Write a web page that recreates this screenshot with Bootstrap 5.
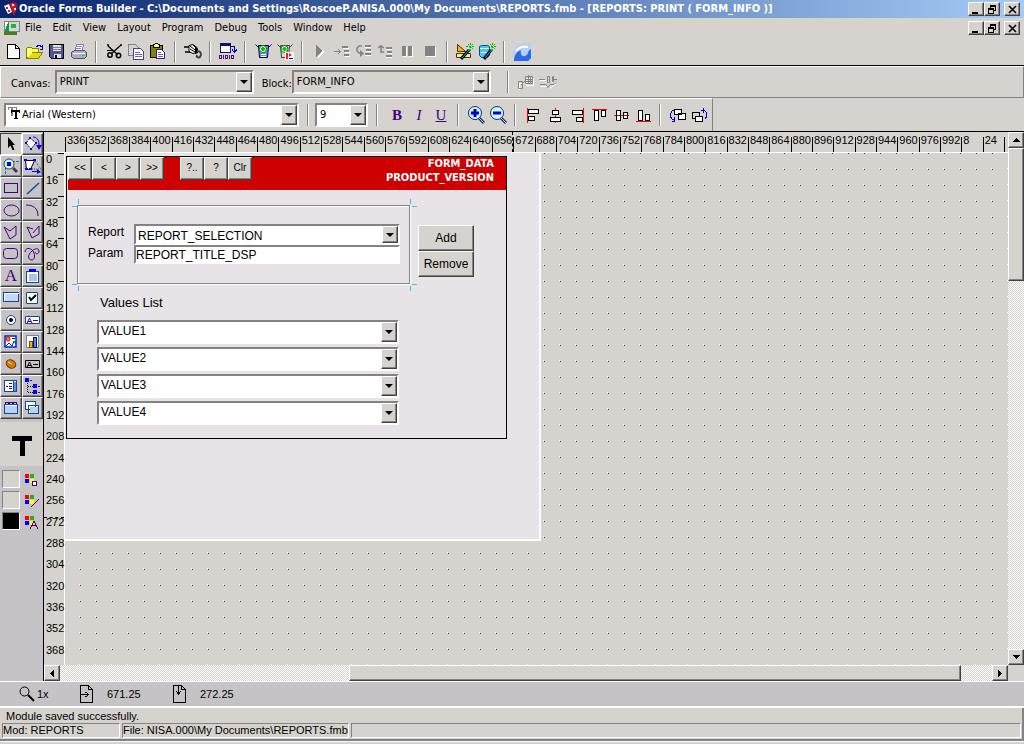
<!DOCTYPE html>
<html lang="en">
<head>
<meta charset="utf-8">
<meta name="viewport" content="width=device-width, initial-scale=1">
<title>Oracle Forms Builder</title>
<link href="https://cdn.jsdelivr.net/npm/bootstrap@5.3.0/dist/css/bootstrap.min.css" rel="stylesheet">
<style>
:root{--face:#d6d3ce;--panel:#c6c3c6;--shade:#848284;--deep:#424142;--form:#e7e3e7;}
body{font-family:"DejaVu Sans Condensed","DejaVu Sans",sans-serif;font-size:11px;line-height:14px;color:#000;background:var(--face)}
.arial{font-family:"Liberation Sans",Arial,sans-serif;font-size:12px}
svg{shape-rendering:crispEdges;display:block;flex:none}
svg.soft{shape-rendering:auto}
button,select,input{font:inherit;color:inherit;border-radius:0}
.bevel{background:var(--face);border:1px solid;border-color:#fff var(--deep) var(--deep) #fff;box-shadow:inset -1px -1px var(--shade);padding:0}
.titlebar{height:18px;background:linear-gradient(90deg,#08246b,#a5cbf7);color:#fff;padding-left:4px}
.titlebar h1{font-size:11px;line-height:18px;font-weight:700;margin:0 0 0 2px}
.winbtn{width:16px;height:14px;display:flex;align-items:center;justify-content:center;color:#000}
.menubar{height:20px;padding-left:4px}
.menubar a{color:#000;text-decoration:none;padding:0 6px 0 5px}
.tools{height:28px;padding-left:2px;border-bottom:1px solid #000}
.tool{width:22px;height:22px;border:0;background:none;padding:0;display:flex;align-items:center;justify-content:center;flex:none}
.glyph{font-family:"Liberation Serif",serif;font-size:15px;line-height:18px;color:#4a007b}
.vsep{width:2px;margin:0 6px 0 5px;height:22px;background:var(--shade);border-right:1px solid #fff;flex:none}
.canvasbar{height:32px;border:1px solid;border-color:#fff var(--shade) var(--shade) #fff;padding-left:10px}
.formatbar{height:33px;border-right:1px solid var(--shade);border-top:1px solid #fff;padding-left:4px;width:max-content;padding-right:1px}
.drop{position:relative;display:block}
.drop::before{content:"";position:absolute;right:2px;top:2px;bottom:2px;width:16px;background:var(--face);border:1px solid;border-color:#fff var(--deep) var(--deep) #fff;box-shadow:inset -1px -1px var(--shade);pointer-events:none}
.drop::after{content:"";position:absolute;right:6px;top:calc(50% - 2px);border:4px solid transparent;border-top-color:#000;border-bottom:0;pointer-events:none}
.combo{appearance:none;background:var(--face);border:2px solid;border-color:var(--shade) #fff #fff var(--shade);outline:0;padding:0 18px 2px 3px;height:24px;width:100%;line-height:15px}
.combo.paper{background:#fff}
.w-canvas{width:199px}.w-block{width:199px}.w-font{width:295px}.w-size{width:53px}
.w-font .combo{padding-left:16px}
.w-font svg{position:absolute;left:4px;top:4px}
.work{border-top:1px solid #000}
.palette{width:44px;background:var(--panel);border-right:1px solid #000;flex:none}
.palgrid{display:grid;grid-template-columns:22px 21px;grid-auto-rows:22px;padding-top:1px}
.palgrid button{background:var(--panel);border:1px solid;border-color:#fff var(--deep) var(--deep) #fff;box-shadow:inset -1px -1px var(--shade);padding:0;display:flex;align-items:center;justify-content:center;overflow:hidden}
.palgrid .on{background:var(--face);border-color:var(--deep) #fff #fff var(--deep);box-shadow:none}
.palgrid .letter{color:#42007b;font-family:"Liberation Serif",serif;font-size:17px}
.sample{height:44px;background:var(--face);margin-top:3px;padding-top:3px}
.swatches{gap:3px;padding:4px 0 0 2px}
.swatch{width:18px;height:18px;border:1px solid;border-color:var(--shade) #fff #fff var(--shade);background:var(--face)}
.ruler{font-family:"Liberation Sans",Arial,sans-serif;font-size:11px}
.htop{height:21px;border-bottom:1px solid #fff}
.hticks{display:grid;grid-template-columns:repeat(44,minmax(0,1fr));margin:0 4px 0 21px;position:relative}
.hticks span{position:relative;padding-left:2px;line-height:16px;height:20px;white-space:nowrap}
.hticks span::before,.hticks span:last-child::after{content:"";position:absolute;left:0;top:5px;bottom:0;width:1px;background:#000}
.hticks span:last-child::after{left:100%}
.vrule{width:21px;flex:none;border-right:1px solid #fff;height:512px;position:relative;display:grid;grid-template-rows:repeat(24,minmax(0,1fr))}
.vrule span{position:relative;padding-left:2px;line-height:13px}
.vrule span.short::before{content:"";position:absolute;right:0;top:0;width:6px;height:1px;background:#000}
.vrule i{position:absolute;left:0;right:0;top:71%;border-top:1px dashed #000}
.hticks i{position:absolute;left:47.6%;top:0;height:20px;border-left:1px dashed #000}
.stage{background:url("data:image/svg+xml,%3Csvg xmlns='http://www.w3.org/2000/svg' width='16' height='16' shape-rendering='crispEdges'%3E%3Crect x='14' y='14' width='1' height='1' fill='%23fff'/%3E%3Crect x='15' y='15' width='1' height='1' fill='%23424142'/%3E%3C/svg%3E") 0 1px}
.sheet{width:476px;height:388px;background:var(--form);border:2px solid #fff;border-width:0 2px 2px 0;padding:3px 0 0 1px}
.frm{width:441px;height:283px;border:1px solid #000}
.band{height:33px;background:#ce0000;margin-left:1px;color:#fff;font-weight:700;line-height:14px}
.band button{width:24px;height:23px;color:#000;font-weight:400;line-height:18px;font-size:10px;padding-bottom:2px}
.group{width:333px;height:79px;border:1px solid var(--shade);box-shadow:inset 1px 1px #fff,1px 1px #fff;margin:15px 0 0 10px;position:relative;padding:18px 8px 0 10px}
.group>svg{position:absolute;left:-6px;top:-8px}
.pairs{display:grid;grid-template-columns:46px 266px;align-items:start;font-size:12px}
.pairs .combo{height:21px;padding:3px 18px 0 2px}
.field{border:2px solid;border-color:var(--shade) #fff #fff var(--shade);outline:0;background:#fff;height:19px;padding:0;width:100%;line-height:15px}
.pairs label,.cap{font-family:"Liberation Sans",sans-serif;font-size:12px}
.pairs label{padding-top:1px}
.cap{margin:12px 0 0 33px;font-size:13px}
.acts{padding-top:35px}
.act{width:56px;height:26px}
.vals{width:302px;display:grid;gap:3px;margin:10px 0 0 30px}
.vals .combo{padding-left:2px;padding-bottom:1px}
.track{background:repeating-conic-gradient(#fff 0 25%,var(--face) 0 50%) 0 0/2px 2px}
.vscroll{width:16px;flex:none}
.vthumb{height:25%}
.hscroll{height:16px;margin-right:16px}
.hthumb{margin-left:30%;width:63.5%}
.sbtn{width:16px;height:16px;flex:none;display:flex;align-items:center;justify-content:center}
.zoombar{background:var(--panel);height:27px;border-top:1px solid #fff;border-bottom:2px solid #fff;padding-left:19px;font-family:"Liberation Sans",sans-serif}
.zoomval{width:45px;padding-left:2px}
.posval{width:80px;padding-left:14px}
.status{border-right:2px solid var(--shade);border-bottom:2px solid var(--shade);padding:1px 1px 1px 2px;font-family:"Liberation Sans",sans-serif}
.cells{gap:2px}
.cell{border:1px solid;border-color:var(--shade) #fff #fff var(--shade);height:15px;line-height:13px;white-space:nowrap}
.cell-mod{width:118px}
.foot{height:3px;border-top:1px solid #fff}
</style>
</head>
<body class="d-flex flex-column min-vh-100">
<header>
<div class="titlebar d-flex align-items-center">
<svg class="soft" width="13" height="14" viewBox="0 0 13 14" aria-hidden="true"><path fill="#fff" d="M0 4l5-2 3 8-4 2z"/><path fill="#de1018" d="M5 2l4-2 4 2-1 8-3 1-1-3z"/><path fill="#fff" d="M8 2h2v2H8zM10 6h2v2h-2z"/><path fill="#de1018" d="M2 5h2v2H2zM4 8h2v2H4zM9 9l3 5-3-2z"/></svg>
<h1 class="flex-grow-1 text-nowrap">Oracle Forms Builder - C:\Documents and Settings\RoscoeP.ANISA.000\My Documents\REPORTS.fmb - [REPORTS: PRINT ( FORM_INFO )]</h1>
<div class="d-flex pe-1">
<button class="bevel winbtn" aria-label="Minimize"><svg width="10" height="9"><path fill="#000" d="M1 7h6v2H1z"/></svg></button>
<button class="bevel winbtn" aria-label="Restore"><svg width="10" height="10"><path fill="none" stroke="#000" d="M3.500 4V1.500h5V6H7M1.500 4.500h5V9h-5zM3 2.500h6M1 5.500h6"/></svg></button>
<button class="bevel winbtn ms-1" aria-label="Close"><svg class="soft" width="9" height="9"><path stroke="#000" stroke-width="1.600" d="M1 1l7 7M8 1L1 8"/></svg></button>
</div></div>
<div class="menubar d-flex align-items-center">
<svg width="16" height="15" viewBox="0 0 16 15" aria-hidden="true"><path fill="#848284" d="M0 0h16v11H0z"/><path fill="#fff" d="M1 1h3v8H1z"/><path fill="#109a42" d="M3 3l3-2v9l-6 3z"/><path fill="#c6dfd6" d="M5 1h10v9H5z"/><path fill="#31aa31" d="M7 3h5v4H7z"/><path fill="#52791a" d="M0 11h13v3H0z"/></svg>
<nav class="d-flex flex-grow-1" aria-label="Menu"><a href="#">File</a><a href="#">Edit</a><a href="#">View</a><a href="#">Layout</a><a href="#">Program</a><a href="#">Debug</a><a href="#">Tools</a><a href="#">Window</a><a href="#">Help</a></nav>
<div class="d-flex pe-1">
<button class="bevel winbtn" aria-label="Minimize form"><svg width="10" height="9"><path fill="#000" d="M1 7h6v2H1z"/></svg></button>
<button class="bevel winbtn" aria-label="Restore form"><svg width="10" height="10"><path fill="none" stroke="#000" d="M3.500 4V1.500h5V6H7M1.500 4.500h5V9h-5zM3 2.500h6M1 5.500h6"/></svg></button>
<button class="bevel winbtn ms-1" aria-label="Close form"><svg class="soft" width="9" height="9"><path stroke="#000" stroke-width="1.600" d="M1 1l7 7M8 1L1 8"/></svg></button>
</div></div>
<div class="tools d-flex align-items-center" role="toolbar" aria-label="Standard">
<button class="tool" aria-label="New"><svg width="13" height="15"><path fill="#fff" stroke="#000" d="M.5.5h8l3.500 3.500v10.500H.5z"/><path fill="none" stroke="#000" d="M8.500.5V4.500H12"/></svg></button>
<button class="tool" aria-label="Open"><svg width="18" height="16"><path fill="#ffff4a" stroke="#848200" d="M.5 14.500V4.500l1-1h4l1 1h6v4"/><path fill="#dede00" stroke="#848200" d="M.5 14.500l5-6h11l-4 6z"/><path fill="#ffff7b" d="M1 5h5v4l-4 4H1z"/><path fill="none" stroke="#0000ce" d="M10.500 3C12 1 14 1 16.500 3.500M16.500 1v4h-3"/></svg></button>
<button class="tool" aria-label="Save"><svg width="16" height="15"><path fill="#525594" stroke="#000" d="M.5.5h14v14H2.500l-2-2z"/><path fill="#dedfe7" d="M4 1h8v6H4z"/><path fill="#dedfe7" d="M5 10h7v4H5z"/><path fill="#000" d="M6 11h2v3H6z"/><path stroke="#848284" d="M4 3.500h8M4 5.500h8"/></svg></button>
<button class="tool" aria-label="Print"><svg width="17" height="15"><path fill="#fff" stroke="#7b7db5" d="M4.500 6.500l1-6h7l-1 6"/><path fill="#adaec6" stroke="#52556b" d="M.5 8.500l3-2h10l2 2v4l-2 2h-11l-2-2z"/><path fill="#fff" d="M2 9h12v1H2z"/><path fill="#31cf31" d="M11 11h3v1h-3z"/><path stroke="#8486c6" d="M6 2.500h5M5 4.500h5"/></svg></button>
<span class="vsep"></span>
<button class="tool" aria-label="Cut"><svg class="soft" width="17" height="15"><path stroke="#000" stroke-width="1.300" d="M2 2l10 9M15 1L5 10M1 1h2M14 1h2"/><circle cx="4" cy="11" r="2.200" fill="none" stroke="#000" stroke-width="1.500"/><circle cx="12.500" cy="11.500" r="2.200" fill="none" stroke="#000" stroke-width="1.500"/><path stroke="#000" d="M1 6.500h6"/></svg></button>
<button class="tool" aria-label="Copy"><svg width="17" height="16"><path fill="#d6d3ce" stroke="#848284" d="M.5.5h7l3 3v8H.5z"/><path fill="#fff" stroke="#424194" d="M5.500 4.500h7l3 3v8h-10z"/><path stroke="#6b69bd" d="M7 8.500h5M7 10.500h7M7 12.500h7"/></svg></button>
<button class="tool" aria-label="Paste"><svg width="16" height="17"><path fill="#848200" stroke="#000" d="M.5 2.500h12v12H.5z"/><path fill="#ffff63" stroke="#000" d="M3.500 1.500h1l1-1h2l1 1h1v3h-6z"/><path fill="#fff" stroke="#29287b" d="M6.500 6.500h5l3 3v6h-8z"/><path stroke="#6b69bd" d="M8 9.500h3M8 11.500h5M8 13.500h5"/></svg></button>
<span class="vsep"></span>
<button class="tool" aria-label="Connect"><svg width="19" height="15" class="soft"><path stroke="#000" stroke-width="1.500" d="M0 3h6M1 8h6"/><path fill="#fff" stroke="#000" d="M5 1.500l4-1 4 3v5l-4 1-4-2z"/><path stroke="#000" d="M6 2l5 4M6 5l5 3M9 1l3 3"/><path fill="#000" d="M11 3l3 2v4l-3 1z"/><path fill="none" stroke="#424142" stroke-width="2" d="M13 7c4 0 5 3 3 6-2 1-4 0-3-2"/></svg></button>
<span class="vsep"></span>
<button class="tool" aria-label="Compile"><svg width="18" height="17"><path fill="#fff" stroke="#10107b" d="M1.500.5h10v9h-10z"/><path fill="#10107b" d="M1 0h11v3H1z"/><path fill="none" stroke="#0000ce" d="M12 3.500h3.500V9M13 6.500l2.500 3 2.500-3"/><path fill="none" stroke="#4a1073" d="M.5 12.500h2v3h-2zM4.500 12v4M6.500 12.500h2v3h-2zM10.500 12v4M12.500 12.500h2v3h-2z"/></svg></button>
<span class="vsep"></span>
<button class="tool" aria-label="Run form"><svg class="soft" width="17" height="16"><path fill="#738ed6" stroke="#00005a" d="M3.500 1.500h10l-1 12h-8zM.5.500l3 3M16.500.500l-3 3"/><circle cx="8" cy="5" r="3.500" fill="#e7ffe7" stroke="#008200"/><path stroke="#00c600" stroke-width="2" d="M6 5h4M8 3v4"/><path fill="#fff" d="M6 10h5v1H6zM6 12h5v1H6z"/></svg></button>
<button class="tool" aria-label="Debug form"><svg class="soft" width="17" height="16"><path fill="#d6d3d6" stroke="#424142" d="M3.500 1.500h9l-1 12h-7zM.5.500l3 3M15.500.500l-3 3"/><circle cx="7.500" cy="5" r="3.500" fill="#e7ffe7" stroke="#008200"/><path stroke="#00c600" stroke-width="2" d="M5.500 5h4M7.500 3v4"/><path fill="#fff" d="M8 8h9v8H8z"/><path fill="#f71810" d="M9 9h2v6H9zM12 9l3 2-3 2z"/><path fill="#00a" d="M12 14h4v1h-4z"/></svg></button>
<span class="vsep"></span>
<button class="tool" aria-label="Go" disabled><svg width="9" height="13"><path fill="#fff" d="M2 2l7 5-7 6z"/><path fill="#848284" d="M0 0l7 6-7 6z"/></svg></button>
<button class="tool" aria-label="Step into" disabled><svg width="16" height="12"><path fill="none" stroke="#848284" d="M0 5.500h6M4 3l2.500 2.500L4 8" /><path stroke="#848284" stroke-width="2" d="M8 1h6M10 5h5M10 9h5"/><path stroke="#fff" d="M9 2.500h6M11 6.500h5M11 10.500h5"/></svg></button>
<button class="tool" aria-label="Step over" disabled><svg class="soft" width="16" height="13"><path fill="none" stroke="#848284" stroke-width="1.500" d="M6 1H3L1 3v3l2 2h2"/><path fill="#848284" d="M4 5l4 3.500L4 12z"/><path stroke="#848284" stroke-width="2" d="M9 1h6M10 5h5M9 9h6"/><path stroke="#fff" d="M9 2.500h6M10 6.500h5M9 10.500h6"/></svg></button>
<button class="tool" aria-label="Step out" disabled><svg class="soft" width="16" height="13"><path fill="none" stroke="#848284" stroke-width="1.500" d="M6 7H3V1M0 3l3-2 3 2"/><path stroke="#848284" stroke-width="2" d="M8 3h6M9 7h5M8 11h6"/><path stroke="#fff" d="M8 4.500h6M9 8.500h5M8 12.500h6"/></svg></button>
<button class="tool" aria-label="Pause" disabled><svg width="12" height="11"><path fill="#fff" d="M1 1h4v10H1zM7 1h4v10H7z"/><path fill="#848284" d="M0 0h4v10H0zM6 0h4v10H6z"/></svg></button>
<button class="tool" aria-label="Stop" disabled><svg width="11" height="11"><path fill="#fff" d="M1 1h10v10H1z"/><path fill="#848284" d="M0 0h10v10H0z"/></svg></button>
<span class="vsep"></span>
<button class="tool" aria-label="Layout wizard"><svg class="soft" width="18" height="17"><path fill="#ffb600" stroke="#4a3000" d="M1.500 1.500l8 7h-8z"/><path fill="#ffe794" stroke="#4a3000" d="M.5 10.500h14v4H.5z"/><path stroke="#000" stroke-width="3" d="M5 16l8-9"/><path stroke="#00aaff" d="M6 15l8-9"/><path stroke="#00b600" stroke-dasharray="2 1" d="M14.500 0v8M10 3.500h8M12 1l5 5M17 1l-4 4"/></svg></button>
<button class="tool" aria-label="Data block wizard"><svg class="soft" width="18" height="17"><path fill="#42c7ff" stroke="#00517b" d="M1.500 3.500l2-1h6l2 1v9l-2 2h-6l-2-2z"/><path stroke="#fff" d="M2 5.500h9M3 9.500h6"/><path stroke="#000" stroke-width="3" d="M6 16l7-9"/><path stroke="#00aaff" d="M7 15l7-9"/><path stroke="#00b600" stroke-dasharray="2 1" d="M14.500 0v8M10 3.500h8M12 1l5 5M17 1l-4 4"/></svg></button>
<span class="vsep"></span>
<button class="tool" aria-label="Web help"><svg class="soft" width="18" height="18"><path fill="#b5cff7" d="M0 12C0 3 6 0 18 0v18H3z"/><path fill="#296be7" d="M1 18c0-5 2-9 7-11-1 4 1 7 4 6 4-1 2-5 6-7v9l-3 3z"/><path fill="none" stroke="#fff" stroke-width="2" d="M3 8C6 4 10 3 15 4"/></svg></button>
</div>
<div class="canvasbar d-flex align-items-center">
<label for="cv" class="me-1 pt-1">Canvas:</label>
<span class="drop w-canvas"><select id="cv" class="combo"><option>PRINT</option></select></span>
<label for="bl" class="ms-2 pt-1">Block:</label>
<span class="drop w-block"><select id="bl" class="combo"><option>FORM_INFO</option></select></span>
<span class="vsep ms-3"></span>
<button class="tool" disabled aria-label="Apply template"><svg class="soft" width="18" height="15"><path fill="none" stroke="#fff" d="M2.500 15V8.500h4M9.500 3.500h7v7h-7z"/><path fill="none" stroke="#848284" d="M1.500 6.500h4v7h-4zM4 10l5-5M8.500 1.500h7v7h-7zM9 4.500h6M9 6.500h6M11.500 0v8M13.500 2v6"/></svg></button>
<button class="tool" disabled aria-label="Merge"><svg class="soft" width="18" height="14"><path fill="none" stroke="#fff" d="M1 5.500h6M2 11.500h7M11 13.500l6-5"/><path fill="none" stroke="#848284" d="M0 4.500h6M1 9.500h6l2 3 2-3h4l2-2M8.500 1.500h2v6h-2zM13.500 1.500h1v5h-1zM15 4.500h3"/></svg></button>
</div>
<div class="formatbar d-flex align-items-center" role="toolbar" aria-label="Format">
<span class="drop w-font"><select class="combo paper" aria-label="Font"><option>Arial (Western)</option></select>
<svg width="13" height="13"><path fill="#848284" d="M0 0h9v3H8V1H5v8H3V1H1v2H0z"/><path fill="#000" d="M3 3h9v3h-1V5H9v6h1v1H6v-1h1V5H4v1H3z"/></svg></span>
<span class="vsep ms-2"></span>
<span class="drop w-size"><select class="combo paper" aria-label="Size"><option>9</option></select></span>
<span class="vsep mx-2"></span>
<button class="tool glyph fw-bold">B</button>
<button class="tool glyph fst-italic">I</button>
<button class="tool glyph text-decoration-underline">U</button>
<span class="vsep"></span>
<button class="tool" aria-label="Zoom in"><svg class="soft" width="18" height="18"><circle cx="8" cy="7" r="6.500" fill="#cef7ff" stroke="#10306b"/><path stroke="#10306b" stroke-width="3" d="M12 12l5 5"/><path stroke="#c6c3c6" d="M12 12l5 5"/><path stroke="#0000ce" stroke-width="3" d="M4 7h8M8 3v8"/></svg></button>
<button class="tool" aria-label="Zoom out"><svg class="soft" width="18" height="18"><circle cx="8" cy="7" r="6.500" fill="#cef7ff" stroke="#10306b"/><path stroke="#10306b" stroke-width="3" d="M12 12l5 5"/><path stroke="#c6c3c6" d="M12 12l5 5"/><path stroke="#0000ce" stroke-width="3" d="M4 7h8"/></svg></button>
<span class="vsep"></span>
<button class="tool" aria-label="Align left"><svg width="13" height="15"><path stroke="red" d="M.5 0v15"/><path fill="#fff" stroke="#000" d="M1.500 1.500h10v4h-10zM1.500 8.500h6v4h-6z"/></svg></button>
<button class="tool" aria-label="Align center"><svg width="13" height="15"><path stroke="red" d="M6.500 0v15"/><path fill="#fff" stroke="#000" d="M3.500 2.500h6v4h-6zM1.500 9.500h10v4h-10z"/></svg></button>
<button class="tool" aria-label="Align right"><svg width="13" height="15"><path stroke="red" d="M12.500 0v15"/><path fill="#fff" stroke="#000" d="M1.500 2.500h10v4h-10zM5.500 9.500h6v4h-6z"/></svg></button>
<button class="tool" aria-label="Align top"><svg width="15" height="13"><path stroke="red" d="M0 .5h15"/><path fill="#fff" stroke="#000" d="M2.500 1.500h4v10h-4zM9.500 1.500h4v6h-4z"/></svg></button>
<button class="tool" aria-label="Align middle"><svg width="15" height="13"><path stroke="red" d="M0 6.500h15"/><path fill="#fff" stroke="#000" d="M2.500 1.500h4v10h-4zM9.500 3.500h4v6h-4z"/><path stroke="red" d="M3 6.500h3M10 6.500h3"/></svg></button>
<button class="tool" aria-label="Align bottom"><svg width="15" height="13"><path stroke="red" d="M0 12.500h15"/><path fill="#fff" stroke="#000" d="M2.500 1.500h4v10h-4zM9.500 5.500h4v6h-4z"/></svg></button>
<span class="vsep"></span>
<button class="tool" aria-label="Bring to front"><svg width="16" height="15"><path fill="none" stroke="#0000de" d="M5 2.500H2.500l-2 3V9l2 2.500H4M2 13.500h3M4.500 9v5"/><path fill="#fff" stroke="#000" d="M4.500 1.500h7v5h-7zM8.500 5.500h7v6h-7z"/></svg></button>
<button class="tool" aria-label="Send to back"><svg width="16" height="15"><path fill="none" stroke="#0000de" d="M9 2.500h3.500l2 2V9l-2 2.500M11.500 0v5"/><path fill="#d6d3ce" stroke="#000" d="M.5 4.500h7v6h-7z"/><path fill="#fff" stroke="#000" d="M3.500 8.500h7v5h-7z"/></svg></button>
</div>
</header>

<main class="work d-flex flex-grow-1">
<aside class="palette" aria-label="Tool palette">
<div class="palgrid">
<button class="on" aria-label="Select"><svg width="9" height="14" class="soft"><path d="M1 0v11l2.500-2.500L5.500 13h2L5.500 8H8z"/></svg></button>
<button aria-label="Rotate"><svg class="soft" width="18" height="16"><path fill="#fff" stroke="#000" stroke-dasharray="2 1" d="M6 2l6 5-5 6-5-6z"/><path fill="#00f" d="M1 6h2v2H1zM5 1h2v2H5zM6 12h2v2H6zM11 6h2v2h-2z"/><path fill="none" stroke="#00f" d="M9 1c4 0 6 3 6 8"/><path fill="#00f" d="M12 9h6l-3 5z"/></svg></button>
<button aria-label="Magnify"><svg class="soft" width="18" height="18"><path stroke="#00829c" stroke-dasharray="3 1" d="M3.500 6v12M6 4.500h12"/><circle cx="7" cy="7" r="5" fill="#cef7ff" stroke="#424142"/><path fill="#00f" d="M5 5h4v4H5z"/><path stroke="#424142" stroke-width="3" d="M11 11l4 4"/></svg></button>
<button aria-label="Reshape"><svg class="soft" width="18" height="16"><path fill="#fff" stroke="#000" d="M1.500 2.500h9l-4 9h-4z"/><path fill="none" stroke="#424142" stroke-dasharray="1 1" d="M11 3l6 8h-11"/><path fill="#00f" d="M0 1h3v2H0zM9 1h3v2H9zM1 10h3v2H1zM5 10h3v2H5zM8 13h6v1H8zM13 11l4 3-4 2z"/></svg></button>
<button aria-label="Rectangle"><svg width="15" height="11"><path fill="none" stroke="#42007b" d="M.5.5h13v9H.5z"/></svg></button>
<button aria-label="Line"><svg class="soft" width="14" height="13"><path stroke="#104a94" stroke-width="1.500" d="M1 12L13 1"/></svg></button>
<button aria-label="Ellipse"><svg class="soft" width="17" height="13"><ellipse cx="8.500" cy="6.500" rx="7.500" ry="5.500" fill="none" stroke="#42007b"/></svg></button>
<button aria-label="Arc"><svg class="soft" width="14" height="13"><path fill="none" stroke="#42007b" d="M0 1c7 0 12 3 12 11"/></svg></button>
<button aria-label="Polygon"><svg class="soft" width="16" height="15"><path fill="none" stroke="#42007b" d="M1 2l6 4 6-5v9l-6 4z"/></svg></button>
<button aria-label="Polyline"><svg class="soft" width="14" height="14"><path fill="none" stroke="#42007b" d="M7 4L1 2l5 11 7-4V1L7 8"/></svg></button>
<button aria-label="Rounded rectangle"><svg class="soft" width="16" height="12"><rect x=".5" y=".5" width="14" height="10" rx="3" fill="none" stroke="#42007b"/></svg></button>
<button aria-label="Freehand"><svg class="soft" width="17" height="14"><path fill="none" stroke="#42007b" d="M1 5C1 1 6 0 9 4c3 5 1 9-1 9-4 0-5-5 0-9 3-3 7-3 7 0s-3 4-4 1"/></svg></button>
<button class="letter" aria-label="Text">A</button>
<button aria-label="Text item"><svg width="14" height="15"><path fill="#fff" stroke="#104a94" d="M.5 2.500h12v11H.5z"/><path fill="#a5c7ef" d="M3 5h8v7H3z"/><path fill="#00f" d="M3 0h7v3H3z"/></svg></button>
<button aria-label="Push button"><svg width="17" height="12"><path fill="#c6d7f7" stroke="#104a94" d="M.5.5h15v9H.5z"/><path fill="none" stroke="#fff" d="M1.500 8.500V1.500h14"/></svg></button>
<button aria-label="Check box"><svg class="soft" width="13" height="13"><path fill="#fff" stroke="#104a94" d="M.5.5h11v11H.5z"/><path fill="none" stroke="#000" stroke-width="2" d="M3 5l2 3 5-5"/></svg></button>
<button aria-label="Radio button"><svg class="soft" width="12" height="12"><circle cx="6" cy="6" r="4.500" fill="#fff" stroke="#104a94"/><circle cx="6" cy="6" r="2"/></svg></button>
<button aria-label="Display item"><svg class="soft" width="16" height="9"><path fill="#fff" stroke="#104a94" d="M.5.5h14v7H.5z"/><path fill="none" stroke="#42007b" d="M2 7l2.500-5L7 7M3 5.500h3M8 4.500h5"/></svg></button>
<button aria-label="Image item"><svg class="soft" width="14" height="14"><path fill="#fff" stroke="#0028c6" stroke-width="1.500" d="M1 1h11v11H1z"/><circle cx="4" cy="4" r="2" fill="#ff9200" stroke="red"/><path fill="none" stroke="#0028c6" d="M2 11l3-3 3 3 2-5 2 3M8 3.500h3"/></svg></button>
<button aria-label="Chart item"><svg width="14" height="14"><path fill="#fff" stroke="#848284" d="M.5.5h12v12H.5z"/><path fill="#ffb600" stroke="#7b4900" d="M3.500 6.500h3v6h-3z"/><path fill="#528eff" stroke="#00087b" d="M7.500 2.500h3v10h-3z"/></svg></button>
<button aria-label="Bean area"><svg class="soft" width="14" height="12"><ellipse cx="7" cy="6" rx="5" ry="4" transform="rotate(25 7 6)" fill="#d67900" stroke="#5a3000"/><path stroke="#ffdb84" d="M4 4l4 2"/></svg></button>
<button aria-label="ActiveX"><svg class="soft" width="16" height="9"><path fill="none" stroke="#000" d="M.5.5h14v7H.5z"/><path fill="none" stroke="#000" d="M2 7l2.500-5L7 7M3 5.500h3M8 4.500h5"/></svg></button>
<button aria-label="List item"><svg width="14" height="13"><path fill="#fff" stroke="#104a94" d="M.5.500h12v11H.5zM9.500 1v11"/><path stroke="#42007b" d="M5 3.500h3M5 6.500h3M5 8.500h3M2 6.500h2"/><path fill="#528eff" d="M10 2h2v9h-2z"/></svg></button>
<button aria-label="Hierarchical tree"><svg width="16" height="17"><path fill="#00f" d="M0 0h4v4H0zM8 6h4v4H8zM8 12h4v4H8z"/><path fill="none" stroke="#000" stroke-dasharray="1 1" d="M2.500 5v9.500H8M3 8.500h5"/><path stroke="#42007b" d="M5 2.500h2M13 8.500h2M13 14.500h2"/></svg></button>
<button aria-label="Tab canvas"><svg width="15" height="14"><path fill="#b5d3f7" stroke="#104a94" d="M.5 3.500h13v9H.5z"/><path fill="none" stroke="#42007b" d="M1.500 3V1.500h3V3M5.500 3V1.500h3V3M9.500 3V1.500h3V3"/><path stroke="#fff" d="M1 4.500h12"/></svg></button>
<button aria-label="Stacked canvas"><svg width="15" height="14"><path fill="#fff" stroke="#104a94" d="M.5.5h10v8h-10zM3.500 4.500h10v8h-10z"/><path fill="#b5d3f7" d="M5 6h8v6H5z"/></svg></button>
</div>
<div class="sample d-flex justify-content-center align-items-center"><svg width="20" height="20"><path d="M0 0h20v5h-7v15H8V5H0z"/></svg></div>
<div class="swatches d-flex flex-column">
<div class="d-flex"><button class="swatch" aria-label="Fill colour"></button><svg class="ms-1" width="16" height="18" viewBox="-1 -4 16 18"><path fill="red" d="M0 0h4v4H0z"/><path fill="#3a1" d="M5 0h4v4H5z"/><path fill="#00f" d="M0 5h4v4H0z"/><path fill="#ff0" d="M5 5h4v4H5z"/><path fill="#fff" stroke="#42007b" d="M7.500 7.500h4v4h-4z"/></svg></div>
<div class="d-flex"><button class="swatch" aria-label="Line colour"></button><svg class="ms-1" width="16" height="18" viewBox="-1 -4 16 18"><path fill="red" d="M0 0h4v4H0z"/><path fill="#3a1" d="M5 0h4v4H5z"/><path fill="#00f" d="M0 5h4v4H0z"/><path fill="#ff0" d="M5 5h4v4H5z"/><path stroke="#42007b" d="M6 12l8-8"/></svg></div>
<div class="d-flex"><button class="swatch bg-black" aria-label="Text colour"></button><svg class="ms-1" width="16" height="18" viewBox="-1 -4 16 18"><path fill="red" d="M0 0h4v4H0z"/><path fill="#3a1" d="M5 0h4v4H5z"/><path fill="#00f" d="M0 5h4v4H0z"/><path fill="#ff0" d="M5 5h4v4H5z"/><path fill="none" stroke="#42007b" d="M5 13l4-8 4 8M7 9.500h5"/></svg></div>
</div>
</aside>
<section class="d-flex flex-column flex-grow-1 overflow-hidden">
<div class="d-flex flex-grow-1">
<div class="flex-grow-1 d-flex flex-column overflow-hidden">
<div class="htop ruler"><div class="hticks" id="hr"><i></i></div></div>
<div class="d-flex flex-grow-1">
<div class="vrule ruler" id="vr"><i></i></div>
<div class="stage flex-grow-1">
<div class="sheet">
<div class="frm">
<div class="band d-flex">
<div class="d-flex arial"><button class="bevel">&lt;&lt;</button><button class="bevel">&lt;</button><button class="bevel">&gt;</button><button class="bevel">&gt;&gt;</button></div>
<div class="d-flex arial ms-3"><button class="bevel">?..</button><button class="bevel">?</button><button class="bevel">Clr</button></div>
<div class="ms-auto text-end pe-2 me-1"><div>FORM_DATA</div><div>PRODUCT_VERSION</div></div>
</div>
<div class="d-flex align-items-start">
<div class="group"><svg width="345" height="94"><path fill="none" stroke="#42baff" d="M6.500 1v5M0 8.500h5M338.500 1v5M340 8.500h5M0 86.500h5M6.500 88v5M340 86.500h5M338.500 88v5"/></svg>
<div class="pairs"><label for="rp">Report</label><span class="drop arial"><select id="rp" class="combo paper"><option>REPORT_SELECTION</option></select></span>
<label for="pm">Param</label><input id="pm" class="field arial" value="REPORT_TITLE_DSP"></div></div>
<div class="acts d-flex flex-column arial ms-2"><button class="bevel act">Add</button><button class="bevel act">Remove</button></div>
</div>
<div class="cap">Values List</div>
<div class="vals arial">
<span class="drop"><select class="combo paper" aria-label="Value 1"><option>VALUE1</option></select></span>
<span class="drop"><select class="combo paper" aria-label="Value 2"><option>VALUE2</option></select></span>
<span class="drop"><select class="combo paper" aria-label="Value 3"><option>VALUE3</option></select></span>
<span class="drop"><select class="combo paper" aria-label="Value 4"><option>VALUE4</option></select></span>
</div>
</div></div></div></div></div>
<div class="vscroll track d-flex flex-column"><button class="bevel sbtn" aria-label="Scroll up"><svg width="7" height="4"><path d="M0 4h7L3.500 0z"/></svg></button><div class="bevel vthumb"></div><button class="bevel sbtn mt-auto" aria-label="Scroll down"><svg width="7" height="4"><path d="M0 0h7L3.500 4z"/></svg></button></div>
</div>
<div class="hscroll track d-flex"><button class="bevel sbtn" aria-label="Scroll left"><svg width="4" height="7"><path d="M4 0v7L0 3.500z"/></svg></button><div class="bevel hthumb"></div><button class="bevel sbtn ms-auto" aria-label="Scroll right"><svg width="4" height="7"><path d="M0 0v7l4-3.500z"/></svg></button></div>
</section>
</main>
<footer>
<div class="zoombar d-flex align-items-center">
<svg class="soft" width="16" height="16"><circle cx="5.500" cy="5.500" r="4.500" fill="none" stroke="#000"/><path stroke="#000" stroke-width="2" d="M9 9l6 6"/></svg><span class="zoomval">1x</span>
<svg width="13" height="18"><path fill="none" stroke="#000" d="M.5.5h8l4 4v13H.5zM8.500.5v4h4M1 9.500h7M5.500 7l3 2.500-3 2.500"/></svg><span class="posval">671.25</span>
<svg width="13" height="18"><path fill="none" stroke="#000" d="M.5.5h8l4 4v13H.5zM8.500.5v4h4M5.500 1v8M3 6l2.500 3L8 6"/></svg><span class="posval">272.25</span>
</div>
<div class="status"><div class="ps-1">Module saved successfully.</div>
<div class="cells d-flex"><div class="cell cell-mod">Mod: REPORTS</div><div class="cell">File: NISA.000\My Documents\REPORTS.fmb</div><div class="cell flex-grow-1"></div></div></div>
<div class="foot"></div>
</footer>
<script src="https://cdn.jsdelivr.net/npm/bootstrap@5.3.0/dist/js/bootstrap.bundle.min.js"></script>
<script>
const hr=document.getElementById('hr'),vr=document.getElementById('vr');
for(let v=336;v<=1024;v+=16){const s=document.createElement('span');s.textContent=v<1000?v:v-1000;hr.append(s);}
for(let v=0;v<=368;v+=16){const s=document.createElement('span');s.textContent=v;if(v<100)s.className='short';vr.append(s);}
</script>
</body>
</html>
